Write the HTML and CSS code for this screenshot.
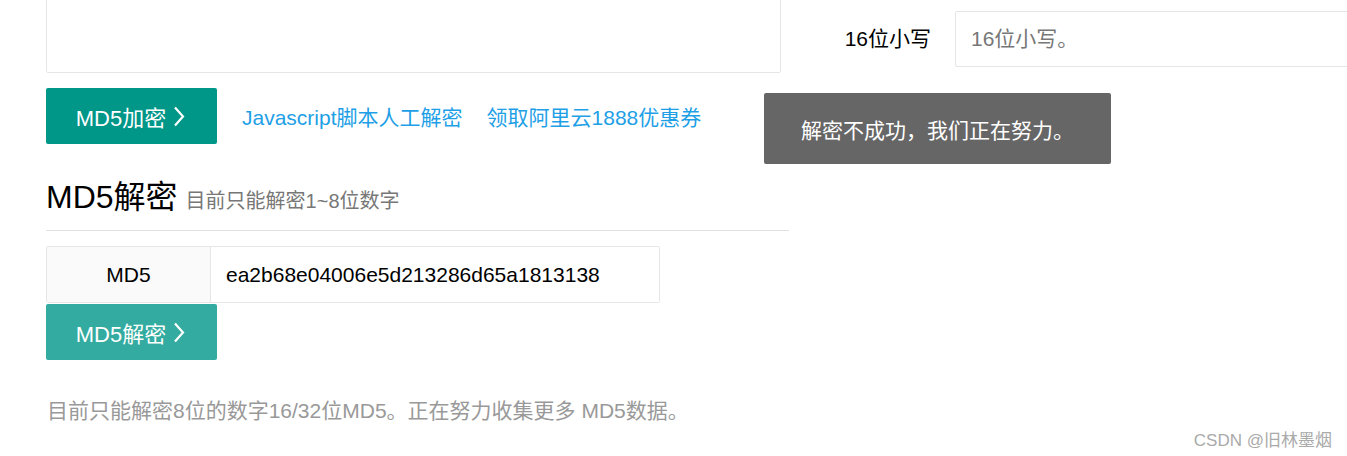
FILE: index.html
```html
<!DOCTYPE html>
<html lang="zh-CN">
<head>
<meta charset="UTF-8">
<meta name="viewport" content="width=device-width, initial-scale=1.0">
<title>MD5在线加密解密</title>
<link rel="stylesheet" href="styles.css">
</head>
<body>
<div class="main">
<div class="col-left">
<textarea class="src-box"></textarea>
<div class="btn-row">
<button class="btn">MD5加密 <svg class="chev" viewBox="0 0 12 21"><polyline points="2 1.5 10 10.5 2 19.5"></polyline></svg></button>
<a class="link" href="#">Javascript脚本人工解密</a>
<a class="link" href="#">领取阿里云1888优惠券</a>
</div>
<div class="section-title">
<h2>MD5解密</h2><small>目前只能解密1~8位数字</small>
</div>
<div class="input-group">
<span class="addon">MD5</span>
<input class="md5-input" type="text" value="ea2b68e04006e5d213286d65a1813138">
</div>
<button class="btn btn-dim">MD5解密 <svg class="chev" viewBox="0 0 12 21"><polyline points="2 1.5 10 10.5 2 19.5"></polyline></svg></button>
<p class="tip">目前只能解密8位的数字16/32位MD5。正在努力收集更多 MD5数据。</p>
</div>
<div class="col-right">
<div class="form-item">
<label class="form-label">16位小写</label>
<input class="form-input" type="text" placeholder="16位小写。">
</div>
</div>
</div>

<div class="layer-msg">解密不成功，我们正在努力。</div>
<div class="watermark">CSDN @旧林墨烟</div>
</body>
</html>
```

FILE: styles.css
```css
*{margin:0;padding:0;box-sizing:border-box;}
body{font-family:"Liberation Sans","Noto Sans CJK SC",sans-serif;color:#333;background:#fff;width:1347px;height:456px;overflow:hidden;position:relative;}
.main{display:grid;grid-template-columns:735px 1fr;column-gap:19px;padding-left:46px;}
.col-left{display:flex;flex-direction:column;}
.src-box{display:block;width:735px;height:113px;margin-top:-40px;border:1px solid #e6e6e6;border-radius:2px;resize:none;outline:none;}
.btn-row{display:flex;align-items:center;margin-top:15px;}
.btn{display:flex;align-items:center;justify-content:center;gap:7px;width:171px;height:56px;padding-right:2px;background:#009688;color:#fff;border:none;border-radius:2px;font-family:inherit;font-size:22px;cursor:pointer;}
.btn-dim{background:#33aba0;margin-top:1px;}
.chev{width:12px;height:21px;fill:none;stroke:#fff;stroke-width:2.2;}
.link{color:#1e9fe6;text-decoration:none;font-size:21px;margin-left:25px;}
.link+.link{margin-left:24px;}
.section-title{display:flex;align-items:baseline;gap:8px;margin-top:27px;padding-bottom:13px;border-bottom:1px solid #e2e2e2;margin-right:-8px;}
.section-title h2{font-weight:normal;font-size:32px;color:#000;}
.section-title small{font-size:20px;color:#777;}
.input-group{display:flex;width:614px;height:57px;margin-top:15px;border:1px solid #e6e6e6;border-radius:2px;}
.addon{width:164px;display:flex;align-items:center;justify-content:center;background:#fafafa;border-right:1px solid #e6e6e6;font-size:21px;color:#000;}
.md5-input{flex:1;border:none;outline:none;padding-left:15px;font-family:inherit;font-size:21px;color:#000;}
.tip{margin-top:34px;margin-left:1px;font-size:21px;color:#999;}
.col-right{padding-top:11px;}
.form-item{display:flex;}
.form-label{width:155px;padding-right:24px;text-align:right;line-height:56px;font-size:21px;color:#000;}
.form-input{width:420px;height:56px;border:1px solid #e6e6e6;border-radius:2px;padding-left:15px;font-family:inherit;font-size:21px;outline:none;}
.form-input::placeholder{color:#777;}
.layer-msg{position:absolute;left:764px;top:93px;width:347px;height:71px;background:#666;color:#fff;border-radius:2px;display:flex;align-items:center;justify-content:center;font-size:21px;}
.watermark{position:absolute;right:15px;top:426px;font-size:17px;color:#aaa;}
```
